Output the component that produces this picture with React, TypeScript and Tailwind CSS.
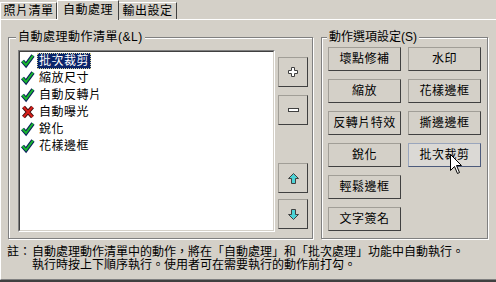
const ITEMS = [
  { label: '批次裁剪', ok: true, selected: true },
  { label: '縮放尺寸', ok: true },
  { label: '自動反轉片', ok: true },
  { label: '自動曝光', ok: false },
  { label: '銳化', ok: true },
  { label: '花樣邊框', ok: true },
]

const ACTIONS = ['壞點修補', '水印', '縮放', '花樣邊框', '反轉片特效', '撕邊邊框', '銳化', '批次裁剪', '輕鬆邊框', '', '文字簽名']

const Check = () => (
  <svg width="16" height="16" viewBox="0 0 16 16">
    <polyline points="2.5,8 6,12 13,2.5" fill="none" stroke="#0a1f5c" strokeWidth="4" strokeLinejoin="miter" />
    <polyline points="2.5,8 6,12 13,2.5" fill="none" stroke="#19b82e" strokeWidth="2" />
  </svg>
)

const Cross = () => (
  <svg width="16" height="16" viewBox="0 0 16 16">
    <path d="M3.5 3 L12.5 13 M12.5 3 L3.5 13" stroke="#3a0a0a" strokeWidth="4" />
    <path d="M3.5 3 L12.5 13 M12.5 3 L3.5 13" stroke="#d8201c" strokeWidth="2" />
  </svg>
)

const Plus = () => (
  <svg width="10" height="10" viewBox="0 0 10 10">
    <path d="M3.5 0.5 H6.5 V3.5 H9.5 V6.5 H6.5 V9.5 H3.5 V6.5 H0.5 V3.5 H3.5 Z" fill="#fff" stroke="#404040" />
  </svg>
)

const Minus = () => (
  <svg width="11" height="4" viewBox="0 0 11 4">
    <rect x="0.5" y="0.5" width="10" height="3" fill="#fff" stroke="#404040" />
  </svg>
)

const Arrow = ({ down }: { down?: boolean }) => (
  <svg width="11" height="11" viewBox="0 0 11 11" className={down ? 'rotate-180' : ''}>
    <path d="M5.5 0.5 L10.5 5.5 H7.5 V10.5 H3.5 V5.5 H0.5 Z" fill="#4dd3d6" stroke="#404040" />
  </svg>
)

const Cursor = () => (
  <svg width="13" height="21" viewBox="0 0 13 21" className="absolute left-[41px] top-[10px]">
    <path d="M0.5 0.5 V16.5 L4.5 12.5 L7.5 19.5 L9.5 18.5 L6.5 11.5 H11.5 Z" fill="#fff" stroke="#000" />
  </svg>
)

const btn = 'border border-t-[#a19e97] border-l-[#a19e97] border-b-[#404040] border-r-[#404040] bg-[#d4d0c8]'

export default function App() {
  return (
    <div className="w-[496px] h-[282px] bg-[#d4d0c8] flex flex-col overflow-hidden text-[12px] leading-[12px] tracking-[0.5px] text-black font-['Liberation_Sans','Noto_Sans_CJK_TC',sans-serif]">
      {/* tabs */}
      <div className="flex items-end h-[19px]">
        <div className="w-[57px] h-[17px] border-t border-l border-white border-r border-r-[#404040] flex items-center justify-center">照片清單</div>
        <div className="relative z-10 self-start w-[62px] h-[20px] bg-[#d4d0c8] border-t border-l border-white border-r border-r-[#404040] flex items-center justify-center pb-[2px]">自動處理</div>
        <div className="w-[58px] h-[17px] border-t border-white border-r border-r-[#404040] flex items-center justify-center">輸出設定</div>
      </div>

      <div className="flex-1 border-b-2 border-[#404040]">
        <div className="h-full border-t border-l border-white border-b border-b-[#808080] pl-[7px] pt-[17px]">
          <div className="flex gap-[8px]">
            {/* group 1 */}
            <div className="relative w-[305px] h-[202px] border border-[#808080] shadow-[inset_1px_1px_0_#fff,1px_1px_0_#fff] pl-[9px] pt-[12px] flex">
              <span className="absolute -top-[7px] left-[7px] px-[2px] bg-[#d4d0c8]">自動處理動作清單(&amp;L)</span>
              <div className="w-[257px] h-[182px] border border-t-[#808080] border-l-[#808080] border-b-white border-r-white">
                <div className="h-full border border-t-[#404040] border-l-[#404040] border-b-[#d4d0c8] border-r-[#d4d0c8] bg-white">
                  {ITEMS.map((it) => (
                    <div key={it.label} className="flex items-center h-[17px]">
                      {it.ok ? <Check /> : <Cross />}
                      <span className={`ml-[1px] h-[16px] flex items-center px-[1px] border ${it.selected ? 'bg-[#0a246a] text-white border-dotted border-[#d8d49a]' : 'border-transparent'}`}>{it.label}</span>
                    </div>
                  ))}
                </div>
              </div>
              <div className="ml-[3px] pt-[7px] flex flex-col">
                <button className={`${btn} w-[30px] h-[30px] flex items-center justify-center`}><Plus /></button>
                <button className={`${btn} mt-[8px] w-[30px] h-[30px] flex items-center justify-center`}><Minus /></button>
                <button className={`${btn} mt-[38px] w-[30px] h-[30px] flex items-center justify-center`}><Arrow /></button>
                <button className={`${btn} mt-[6px] w-[30px] h-[30px] flex items-center justify-center`}><Arrow down /></button>
              </div>
            </div>

            {/* group 2 */}
            <div className="relative w-[167px] h-[202px] border border-[#808080] shadow-[inset_1px_1px_0_#fff,1px_1px_0_#fff] pl-[6px] pt-[9px]">
              <span className="absolute -top-[7px] left-[5px] px-[2px] bg-[#d4d0c8] tracking-[0px]">動作選項設定(S)</span>
              <div className="grid grid-cols-[73px_73px] gap-x-[7px] gap-y-[8px]">
                {ACTIONS.map((a, i) =>
                  a === '' ? <div key={i} /> : a === '批次裁剪' ? (
                    <div key={i} className="relative h-[24px] border border-t-[#9aa6bd] border-l-[#9aa6bd] border-b-[#4d5b7c] border-r-[#4d5b7c] bg-[#dbd9d5] flex items-center justify-center">
                      {a}
                      <Cursor />
                    </div>
                  ) : (
                    <div key={i} className={`${btn} h-[24px] flex items-center justify-center`}>{a}</div>
                  )
                )}
              </div>
            </div>
          </div>

          {/* note */}
          <div className="mt-[7px] -ml-[1px] flex leading-[13px] tracking-[0px]">
            <span className="w-[25px]">註：</span>
            <div className="flex flex-col">
              <span>自動處理動作清單中的動作，將在「自動處理」和「批次處理」功能中自動執行。</span>
              <span>執行時按上下順序執行。使用者可在需要執行的動作前打勾。</span>
            </div>
          </div>
        </div>
      </div>
    </div>
  )
}
